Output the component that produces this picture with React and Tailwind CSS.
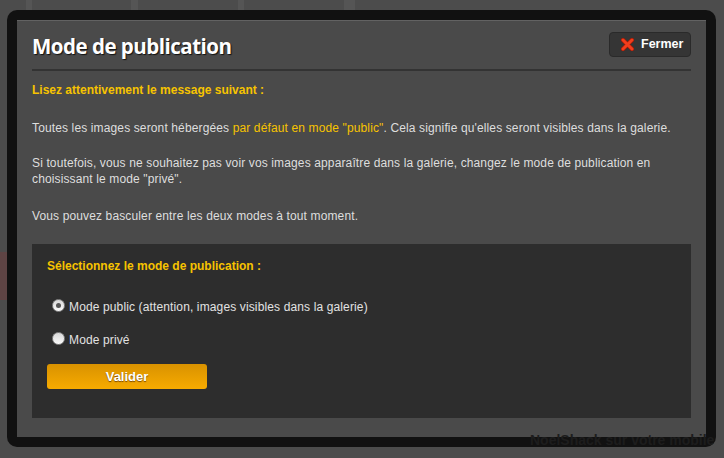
export default function App() {
  const sans = { fontFamily: '"Liberation Sans", Arial, sans-serif' };

  return (
    <div className="relative h-[458px] w-full overflow-hidden bg-[#4c4c4c]" style={sans}>
      {/* faint page behind the overlay */}
      <div className="absolute left-0 top-0 flex h-[10px] w-full">
        <div className="ml-[26px] w-[6px] bg-[#555]" />
        <div className="ml-[99px] w-[7px] bg-[#555]" />
        <div className="ml-[100px] w-[6px] bg-[#555]" />
        <div className="ml-[100px] w-[11px] bg-[#555]" />
      </div>
      <div className="absolute left-0 top-[252px] h-[48px] w-[7px] bg-[#5e4444]" />

      <div className="relative pl-[7px] pt-[10px]">
        <div className="h-[437px] w-[709px] rounded-[10px] bg-[#111] p-[10px]">
          <div className="flex h-full flex-col border-t border-[#626262] bg-[#4a4a4a] px-[15px]">
            {/* header */}
            <div className="flex h-[50px] items-start justify-between border-b-2 border-[#333]">
              <h1
                className="mt-[12px] text-[20.5px] font-bold leading-[26px] tracking-[-0.5px] text-white"
                style={{ fontFamily: '"Open Sans", sans-serif', textShadow: '1px 1px 1px #111' }}
              >
                Mode de publication
              </h1>
              <button className="mt-[11px] flex h-[25px] w-[82px] items-center rounded-[4px] border border-[#2a2a2a] bg-[#353535] pl-[11px] text-[12.5px] font-bold text-white">
                <svg width="13" height="13" viewBox="0 0 13 13" className="mr-[7px]">
                  <path d="M2 2 L11 11 M11 2 L2 11" stroke="#9a1a08" strokeWidth="4.4" strokeLinecap="round" />
                  <path d="M2 2 L11 11 M11 2 L2 11" stroke="#f23d1c" strokeWidth="3" strokeLinecap="round" />
                </svg>
                Fermer
              </button>
            </div>

            {/* message */}
            <div className="pt-[11px] text-[12px] leading-[16px] tracking-[0.13px] text-[#dedede]">
              <p className="font-bold tracking-normal text-[#f7c300]">Lisez attentivement le message suivant :</p>
              <p className="mt-[22px]">
                Toutes les images seront hébergées{' '}
                <span className="text-[#f7c300]">par défaut en mode "public"</span>. Cela signifie qu'elles seront
                visibles dans la galerie.
              </p>
              <p className="mt-[19px] w-[640px]">
                Si toutefois, vous ne souhaitez pas voir vos images apparaître dans la galerie, changez le mode de
                publication en choisissant le mode "privé".
              </p>
              <p className="mt-[21px]">Vous pouvez basculer entre les deux modes à tout moment.</p>
            </div>

            {/* select box */}
            <div className="mt-[20px] h-[174px] bg-[#2d2d2d] px-[15px] pt-[14px] text-[12px] leading-[16px]">
              <p className="font-bold text-[#f7c300]">Sélectionnez le mode de publication :</p>
              <label className="mt-[22px] flex items-center tracking-[0.13px] text-[#e2e2e2]">
                <span className="ml-[5px] mr-[4px] flex h-[13px] w-[13px] items-center justify-center rounded-full border border-[#888] bg-gradient-to-b from-[#d8d8d8] to-[#fafafa]">
                  <span className="h-[5px] w-[5px] rounded-full bg-[#555]" />
                </span>
                <span className="mt-[3px]">Mode public (attention, images visibles dans la galerie)</span>
              </label>
              <label className="mt-[14px] flex items-center tracking-[0.13px] text-[#e2e2e2]">
                <span className="ml-[5px] mr-[4px] h-[13px] w-[13px] rounded-full border border-[#888] bg-gradient-to-b from-[#d8d8d8] to-[#fafafa]" />
                <span className="mt-[3px]">Mode privé</span>
              </label>
              <button
                className="mt-[16px] h-[25px] w-[160px] rounded-[3px] bg-gradient-to-b from-[#d99200] to-[#f7ab00] text-[13px] font-bold text-white"
                style={{ textShadow: '0 1px 1px #7a4a00' }}
              >
                Valider
              </button>
            </div>
          </div>
        </div>
      </div>

      {/* page text showing through the frame */}
      <div className="absolute left-[530px] top-[432px] whitespace-nowrap text-[14px] font-bold leading-[16px] text-[#1d1d1d]">
        NoelShack sur votre mobile
      </div>
    </div>
  );
}
